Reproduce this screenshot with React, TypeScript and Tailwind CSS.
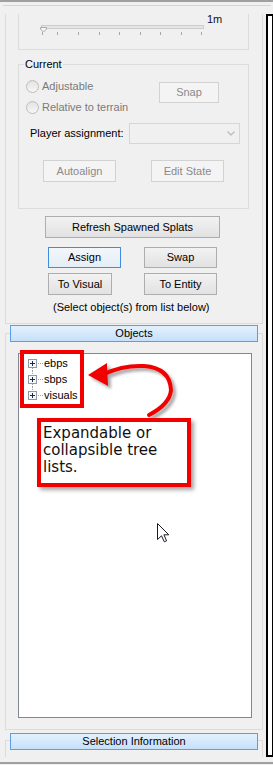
import React from "react";

type Kind = "disabled" | "normal" | "default";

function Btn({ children, kind, className }: { children: React.ReactNode; kind: Kind; className: string }) {
  const k =
    kind === "disabled"
      ? "border-[#d2d2d2] bg-[#f4f4f4] text-[#8a8a8a]"
      : kind === "default"
      ? "border-[#3d8de0] bg-linear-to-b from-[#f3f7fb] to-[#e5edf6] text-black"
      : "border-[#adadad] bg-linear-to-b from-[#f2f2f2] to-[#e2e2e2] text-black";
  return (
    <div className={`flex shrink-0 items-center justify-center border text-[11px] leading-none ${k} ${className}`}>
      {children}
    </div>
  );
}

function Radio({ label }: { label: string }) {
  return (
    <div className="flex h-[21px] items-center">
      <span className="h-[13px] w-[13px] rounded-full border border-[#bdbdbd] bg-linear-to-b from-[#e2e2e2] to-[#f7f7f7]" />
      <span className="ml-[3px] text-[11px] leading-[13px] text-[#7a7a7a]">{label}</span>
    </div>
  );
}

function Header({ children, className }: { children: React.ReactNode; className: string }) {
  return (
    <div
      className={`ml-[4px] flex h-[17px] w-[248px] items-center justify-center border border-[#5a9fe6] bg-linear-to-b from-[#e4f1fd] to-[#c5e0fa] text-[11px] leading-none text-black ${className}`}
    >
      {children}
    </div>
  );
}

function TreeRow({ label, first, last }: { label: string; first?: boolean; last?: boolean }) {
  return (
    <div className="flex h-[16px] items-center">
      <svg width="15" height="16" viewBox="0 0 15 16" className="shrink-0">
        {!first && <line x1="4.5" y1="0" x2="4.5" y2="4" stroke="#a0a0a0" strokeDasharray="1 1" />}
        {!last && <line x1="4.5" y1="13" x2="4.5" y2="16" stroke="#a0a0a0" strokeDasharray="1 1" />}
        <line x1="10" y1="8.5" x2="15" y2="8.5" stroke="#a0a0a0" strokeDasharray="1 1" />
        <rect x="0.5" y="4.5" width="8" height="8" fill="#f7f7f7" stroke="#8e99a8" />
        <line x1="2" y1="8.5" x2="7" y2="8.5" stroke="#1b2a44" />
        <line x1="4.5" y1="6" x2="4.5" y2="11" stroke="#1b2a44" />
      </svg>
      <span className="ml-[1px] text-[11px] leading-[16px] text-black">{label}</span>
    </div>
  );
}

export default function App() {
  const ticks = [23.5, 38.5, 59.5, 80.5, 100.5, 121.5, 141.5, 162.5, 182.5];
  return (
    <div className="flex h-[765px] w-[273px] flex-col overflow-hidden bg-[#f0f0f0] font-['Liberation_Sans',Arial,sans-serif]">
      <div className="h-[2px] bg-[#a0a0a0]" />
      <div className="ml-[3px] mt-[3px] h-[1px] w-[268px] bg-[#d5d5d5]" />
      <div className="mt-[8px] flex h-[743px]">
        <div className="h-full w-[266px] overflow-hidden">
          {/* Outer group 1 */}
          <div className="ml-[5px] w-[258px] border-x border-b border-[#dcdcdc] pb-[9px]">
            {/* slider group */}
            <div className="ml-[12px] w-[231px] border-x border-b border-[#dcdcdc] pb-[13px]">
              <div className="h-[11px] pl-[188px] text-[11px] leading-[11px] text-[#101020]">1m</div>
              <svg width="229" height="11" viewBox="0 0 229 11" className="block">
                <rect x="22.5" y="0.5" width="162" height="3" fill="#e6e6e6" stroke="#cdcdcd" />
                <polygon points="21.5,2.5 27.5,2.5 27.5,4 24.5,7 21.5,4" fill="#f6f6f6" stroke="#a8a8a8" />
                {ticks.map((x) => (
                  <line key={x} x1={x} y1="7" x2={x} y2="10" stroke="#a6a6a6" />
                ))}
              </svg>
            </div>

            {/* Current group */}
            <div className="relative ml-[12px] mt-[14px] w-[231px] border border-[#dcdcdc] pb-[26px]">
              <span className="absolute -top-[7px] left-[5px] bg-[#f0f0f0] px-[1px] text-[11px] leading-[13px] text-black">
                Current
              </span>
              <div className="mt-[11px] flex">
                <div className="flex flex-col pl-[7px]">
                  <Radio label="Adjustable" />
                  <Radio label="Relative to terrain" />
                </div>
                <Btn kind="disabled" className="ml-auto mr-[29px] mt-[6px] h-[21px] w-[60px]">
                  Snap
                </Btn>
              </div>
              <div className="mt-[5px] flex items-center pl-[11px]">
                <span className="w-[99px] shrink-0 text-[11px] leading-[13px] text-black">Player assignment:</span>
                <div className="flex h-[21px] w-[111px] items-center justify-end border border-[#d6d6d6] bg-[#f0f0f0] pr-[4px]">
                  <svg width="8" height="5" viewBox="0 0 8 5">
                    <polyline points="0.5,0.5 4,4 7.5,0.5" fill="none" stroke="#bdbdbd" strokeWidth="1.3" />
                  </svg>
                </div>
              </div>
              <div className="mt-[16px] flex pl-[24px]">
                <Btn kind="disabled" className="h-[22px] w-[73px]">
                  Autoalign
                </Btn>
                <Btn kind="disabled" className="ml-[35px] h-[22px] w-[73px]">
                  Edit State
                </Btn>
              </div>
            </div>

            <Btn kind="normal" className="ml-[39px] mt-[7px] h-[22px] w-[175px]">
              Refresh Spawned Splats
            </Btn>
            <div className="ml-[42px] mt-[9px] flex">
              <Btn kind="default" className="h-[21px] w-[73px]">
                Assign
              </Btn>
              <Btn kind="normal" className="ml-[23px] h-[21px] w-[73px]">
                Swap
              </Btn>
            </div>
            <div className="ml-[42px] mt-[5px] flex">
              <Btn kind="normal" className="h-[22px] w-[64px]">
                To Visual
              </Btn>
              <Btn kind="normal" className="ml-[32px] h-[22px] w-[73px]">
                To Entity
              </Btn>
            </div>
            <div className="ml-[47px] mt-[6px] h-[13px] whitespace-nowrap text-[11px] leading-[13px] text-black">
              (Select object(s) from list below)
            </div>
          </div>

          {/* Objects section */}
          <div className="ml-[5px] mt-[9px] w-[258px] border border-[#dcdcdc] pb-[11px]">
            <Header className="-mt-[9px]">Objects</Header>
            <div className="relative ml-[12px] mt-[11px] h-[365px] w-[234px] border border-[#828790] bg-white">
              <div className="pl-[9px] pt-[1px]">
                <TreeRow label="ebps" first />
                <TreeRow label="sbps" />
                <TreeRow label="visuals" last />
              </div>

              {/* annotation: red box around tree */}
              <div className="absolute left-[1px] top-[-4px] h-[58px] w-[64px] border-[4px] border-[#f20000]" />

              {/* annotation: curved arrow */}
              <svg
                className="absolute left-[61px] top-[1px]"
                width="110"
                height="72"
                viewBox="79 354 110 72"
              >
                <defs>
                  <filter id="sh" x="-20%" y="-20%" width="150%" height="150%">
                    <feDropShadow dx="3" dy="3" stdDeviation="1.5" floodColor="#000" floodOpacity="0.35" />
                  </filter>
                </defs>
                <g filter="url(#sh)">
                  <path
                    d="M103 373 Q 122 364 143 365 Q 169 367 170 389 Q 169 403 148 414"
                    fill="none"
                    stroke="#f20000"
                    strokeWidth="4"
                    strokeLinecap="round"
                  />
                  <polygon points="87,374 106,362 107,385" fill="#f20000" />
                </g>
              </svg>

              {/* annotation: callout text */}
              <div className="absolute left-[18px] top-[64px] h-[69px] w-[154px] border-[4px] border-[#f20000] bg-white pl-[2px] pt-[3px] font-['DejaVu_Sans',sans-serif] text-[15px] leading-[17px] text-[#111] shadow-[3px_3px_4px_rgba(0,0,0,0.35)]">
                Expandable or
                <br />
                collapsible tree
                <br />
                lists.
              </div>

              {/* mouse cursor */}
              <svg className="absolute left-[138px] top-[169px]" width="13" height="20" viewBox="0 0 13 20">
                <path
                  d="M0.5 0.5 L0.5 16.5 L4.5 12.8 L7.3 18.8 L9.6 17.8 L6.9 11.8 L11.8 11.8 Z"
                  fill="#fff"
                  stroke="#1a1a2a"
                  strokeLinejoin="round"
                />
              </svg>
            </div>
          </div>

          {/* Selection Information section */}
          <div className="ml-[5px] mt-[10px] w-[258px] border border-[#dcdcdc] pb-[40px]">
            <Header className="-mt-[8px]">Selection Information</Header>
          </div>
        </div>
        <div className="h-full w-[7px] border-b-2 border-l-2 border-r border-t-2 border-black bg-white" />
      </div>
      <div className="mt-[5px] h-[2px] bg-[#a0a0a0]" />
    </div>
  );
}
